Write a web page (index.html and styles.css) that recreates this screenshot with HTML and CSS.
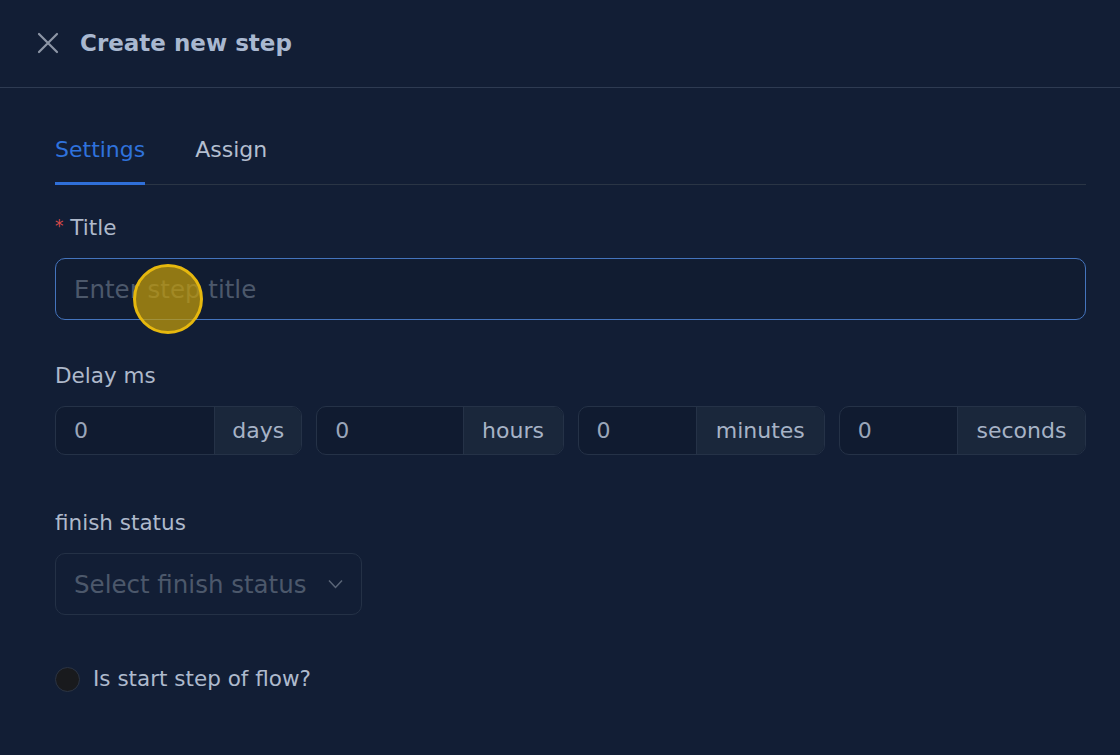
FILE: index.html
```html
<!DOCTYPE html>
<html>
<head>
<meta charset="utf-8">
<link rel="stylesheet" href="styles.css">
</head>
<body>
<div class="panel">
  <header class="head">
    <svg class="close" width="22" height="22" viewBox="0 0 22 22"><path d="M2 2L20 20M20 2L2 20" stroke="#8d96a6" stroke-width="2.2" stroke-linecap="round"/></svg>
    <h1 class="head-title">Create new step</h1>
  </header>
  <main class="body">
    <nav class="tabs">
      <div class="tab active">Settings</div>
      <div class="tab">Assign</div>
    </nav>
    <div class="field title-field">
      <label class="label"><span class="req">*</span> Title</label>
      <div class="text-input focused"><span class="placeholder">Enter step title</span></div>
    </div>
    <div class="field delay-field">
      <label class="label">Delay ms</label>
      <div class="delay-row">
        <div class="group"><span class="gval">0</span><span class="addon a-days">days</span></div>
        <div class="group"><span class="gval">0</span><span class="addon a-hours">hours</span></div>
        <div class="group"><span class="gval">0</span><span class="addon a-min">minutes</span></div>
        <div class="group"><span class="gval">0</span><span class="addon a-sec">seconds</span></div>
      </div>
    </div>
    <div class="field status-field">
      <label class="label">finish status</label>
      <div class="select"><span class="placeholder">Select finish status</span>
        <svg class="chev" width="15" height="10" viewBox="0 0 15 10"><path d="M1 1.5L7.5 8.5L14 1.5" fill="none" stroke="#5a6577" stroke-width="1.5"/></svg>
      </div>
    </div>
    <div class="check-row">
      <span class="radio"></span>
      <span class="check-label">Is start step of flow?</span>
    </div>
  </main>
  <div class="cursor"></div>
</div>
</body>
</html>
```

FILE: styles.css
```css
* { box-sizing: border-box; }
html, body { margin: 0; padding: 0; }
body {
  background: #121e35;
  font-family: "DejaVu Sans", "Noto Sans", sans-serif;
  color: #a9b6cb;
  width: 1120px;
  height: 755px;
  overflow: hidden;
}
.panel { position: relative; height: 755px; }
.head {
  height: 88px;
  border-bottom: 1px solid #2e3b52;
  display: flex;
  align-items: center;
  padding-left: 37px;
  gap: 21px;
}
.close { display: block; margin-top: -2px; }
.head-title {
  margin: 0 0 2px 0;
  font-size: 23px;
  line-height: 28px;
  font-weight: 700;
  color: #a9b8d0;
}
.body { padding: 0 34px 0 55px; }
.tabs {
  display: flex;
  gap: 50px;
  border-bottom: 1px solid #2a3545;
  margin-top: 49px;
}
.tab {
  font-size: 22px;
  line-height: 26px;
  padding-bottom: 21px;
  color: #b4bfd0;
  position: relative;
}
.tab.active { color: #2f72dc; }
.tab.active::after {
  content: "";
  position: absolute;
  left: 0; right: 0; bottom: -1px;
  height: 3px;
  background: #2f6fd8;
}
.title-field { margin-top: 28px; }
.delay-field { margin-top: 43px; }
.status-field { margin-top: 55px; }
.label {
  display: block;
  font-size: 21.5px;
  line-height: 26px;
  color: #aeb9cb;
  margin-bottom: 17px;
}
.req { color: #d84a4a; font-size: 17px; vertical-align: 3px; }
.text-input {
  height: 62px;
  border: 1.5px solid #4474bd;
  border-radius: 10px;
  background: #111c31;
  display: flex;
  align-items: center;
  padding-left: 18px;
}
.placeholder { font-size: 24.5px; color: #4c586b; }
.delay-row { display: flex; gap: 14px; }
.group {
  flex: 1;
  height: 49px;
  border: 1px solid #253247;
  border-radius: 10px;
  overflow: hidden;
  display: flex;
  background: #101b30;
}
.gval {
  flex: 1;
  display: flex;
  align-items: center;
  padding-left: 18px;
  font-size: 22px;
  color: #9aa6ba;
}
.addon {
  background: #1a273b;
  border-left: 1px solid #253247;
  display: flex;
  align-items: center;
  justify-content: center;
  font-size: 22px;
  color: #a7b3c6;
}
.a-days { width: 87px; }
.a-hours { width: 100px; }
.a-min { width: 128px; }
.a-sec { width: 128px; }
.select {
  width: 307px;
  height: 62px;
  border: 1px solid #243146;
  border-radius: 10px;
  display: flex;
  align-items: center;
  justify-content: space-between;
  padding: 0 18px 0 18px;
}
.check-row {
  display: flex;
  align-items: center;
  gap: 13px;
  margin-top: 51px;
}
.radio {
  width: 25px; height: 25px;
  border-radius: 50%;
  background: #191a1d;
  border: 1px solid #2b3444;
}
.check-label { font-size: 21.5px; line-height: 26px; color: #aebacd; }
.cursor {
  position: absolute;
  left: 133px; top: 264px;
  width: 70px; height: 70px;
  border-radius: 50%;
  background: rgba(196, 156, 10, 0.72);
  border: 3px solid #e6b80e;
}
```
